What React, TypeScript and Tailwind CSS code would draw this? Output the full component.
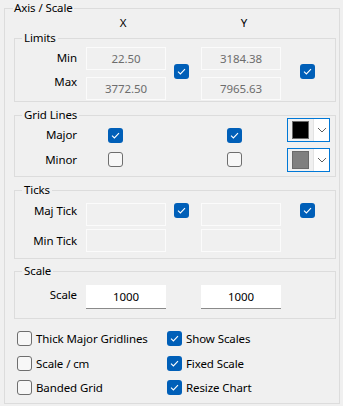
import React from 'react';

function Check({ checked }: { checked?: boolean }) {
  if (checked) {
    return (
      <div className="w-[15px] h-[15px] shrink-0 rounded-[3px] bg-[#005fb8] flex items-center justify-center">
        <svg width="15" height="15" viewBox="0 0 15 15">
          <path d="M4 7.6 L6.4 10 L11 5.2" fill="none" stroke="#ffffff" strokeWidth="1.1" />
        </svg>
      </div>
    );
  }
  return <div className="w-[15px] h-[15px] shrink-0 rounded-[3px] border border-[#6e6e6e] bg-[#f7f7f7]" />;
}

function Box({ value = '', enabled, tall }: { value?: string; enabled?: boolean; tall?: boolean }) {
  const h = tall ? 'h-[24px]' : 'h-[23px]';
  if (enabled) {
    return (
      <div className={`w-[80px] ${h} bg-white border-b border-[#8a8a8a] flex items-center justify-center text-black`}>
        {value}
      </div>
    );
  }
  return (
    <div className={`w-[80px] ${h} bg-[#f0f0f0] border border-[#fbfbfb] flex items-center justify-center text-[#6d6d6d]`}>
      {value}
    </div>
  );
}

function ColorCombo({ color }: { color: string }) {
  return (
    <div className="w-[43px] h-[24px] border border-[#0078d7] bg-white flex">
      <div className="w-[25px] h-full bg-[#f0f0f0] flex items-center justify-center">
        <div className="w-[17px] h-[18px] border border-[#6a6a6a]" style={{ background: color }} />
      </div>
      <div className="flex-1 border-l border-[#e3e3e3] flex items-center justify-center">
        <svg width="10" height="6" viewBox="0 0 10 6">
          <path d="M1 1 L5 5 L9 1" fill="none" stroke="#606060" strokeWidth="1" />
        </svg>
      </div>
    </div>
  );
}

function Group({ title, className = '', children }: { title: string; className?: string; children: React.ReactNode }) {
  return (
    <fieldset className={`w-[322px] border border-[#dcdcdc] ${className}`}>
      <legend className="ml-[7px] px-[2px] leading-[16px]">{title}</legend>
      {children}
    </fieldset>
  );
}

const OPTIONS: [string, boolean][][] = [
  [['Thick Major Gridlines', false], ['Show Scales', true]],
  [['Scale / cm', false], ['Fixed Scale', true]],
  [['Banded Grid', false], ['Resize Chart', true]],
];

export default function App() {
  return (
    <div className="w-[343px] h-[406px] bg-[#f0f0f0] text-[11.5px] tracking-[-0.1px] text-black font-['Segoe_UI','Noto_Sans',sans-serif] overflow-hidden">
      <fieldset className="ml-[4px] w-[336px] h-[404px] border border-[#dcdcdc] pl-[9px] pr-[3px]">
        <legend className="-ml-[1px] px-[1px] leading-[16px]">Axis / Scale</legend>

        {/* column headers */}
        <div className="flex h-[14px] leading-[14px]">
          <span className="ml-[99px] w-[20px] text-center">X</span>
          <span className="ml-[101px] w-[20px] text-center">Y</span>
        </div>

        {/* Limits */}
        <Group title="Limits" className="pb-[1px]">
          <div className="flex">
            <div className="w-[62px] flex flex-col text-right leading-[16px]">
              <span className="mt-[4px]">Min</span>
              <span className="mt-[8px]">Max</span>
            </div>
            <div className="ml-[9px] mt-[1px] flex flex-col gap-[7px]">
              <Box value="22.50" />
              <Box value="3772.50" />
            </div>
            <div className="ml-[8px] mt-[18px]"><Check checked /></div>
            <div className="ml-[12px] mt-[1px] flex flex-col gap-[7px]">
              <Box value="3184.38" />
              <Box value="7965.63" />
            </div>
            <div className="ml-[19px] mt-[18px]"><Check checked /></div>
          </div>
        </Group>

        {/* Grid Lines */}
        <Group title="Grid Lines" className="mt-[5px] pb-[4px]">
          <div className="flex">
            <div className="w-[62px] flex flex-col text-right leading-[16px]">
              <span className="mt-[4px]">Major</span>
              <span className="mt-[9px]">Minor</span>
            </div>
            <div className="ml-[31px] flex flex-col">
              <div className="mt-[5px]"><Check checked /></div>
              <div className="mt-[9px]"><Check /></div>
            </div>
            <div className="ml-[104px] flex flex-col">
              <div className="mt-[5px]"><Check checked /></div>
              <div className="mt-[9px]"><Check /></div>
            </div>
            <div className="ml-[45px] -mt-[5px] flex flex-col gap-[6px]">
              <ColorCombo color="#000000" />
              <ColorCombo color="#808080" />
            </div>
          </div>
        </Group>

        {/* Ticks */}
        <Group title="Ticks" className="mt-[5px] pb-[6px]">
          <div className="flex">
            <div className="w-[62px] flex flex-col text-right leading-[16px]">
              <span className="mt-[5px]">Maj Tick</span>
              <span className="mt-[14px]">Min Tick</span>
            </div>
            <div className="ml-[9px] mt-[5px] flex flex-col gap-[3px]">
              <Box />
              <Box />
            </div>
            <div className="ml-[8px] mt-[5px]"><Check checked /></div>
            <div className="ml-[12px] mt-[5px] flex flex-col gap-[3px]">
              <Box />
              <Box />
            </div>
            <div className="ml-[19px] mt-[5px]"><Check checked /></div>
          </div>
        </Group>

        {/* Scale */}
        <Group title="Scale" className="mt-[4px] pb-[9px]">
          <div className="flex">
            <span className="w-[62px] mt-[8px] text-right leading-[16px]">Scale</span>
            <div className="ml-[9px] mt-[6px]"><Box value="1000" enabled tall /></div>
            <div className="ml-[35px] mt-[6px]"><Box value="1000" enabled tall /></div>
          </div>
        </Group>

        {/* options */}
        <div className="mt-[12px] ml-[3px] grid grid-cols-[150px_1fr] grid-rows-[25px_24px_15px]">
          {OPTIONS.flat().map(([label, on]) => (
            <div key={label} className="flex items-start gap-[4px] leading-[15px] whitespace-nowrap">
              <Check checked={on} />
              <span>{label}</span>
            </div>
          ))}
        </div>
      </fieldset>
    </div>
  );
}
